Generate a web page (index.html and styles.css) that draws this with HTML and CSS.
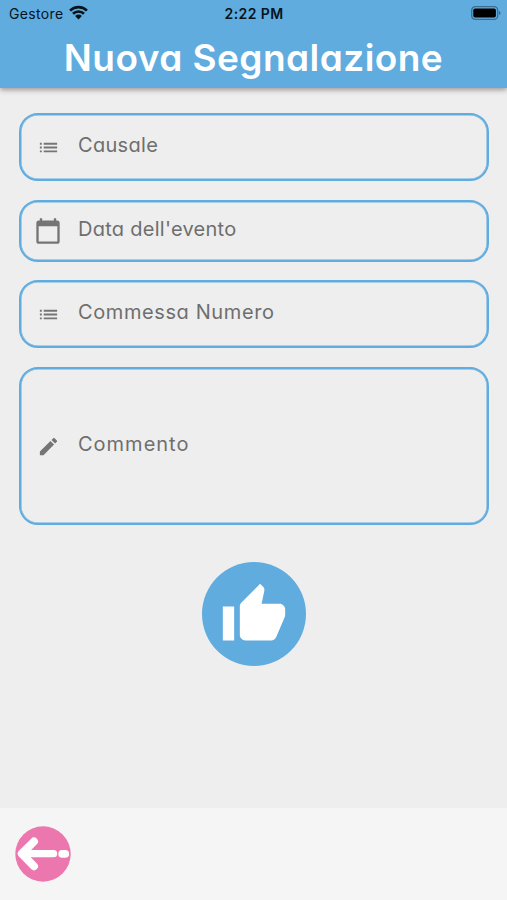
FILE: index.html
```html
<!DOCTYPE html>
<html lang="it">
<head>
<meta charset="utf-8">
<title>Nuova Segnalazione</title>
<link rel="stylesheet" href="styles.css">
</head>
<body>
<header class="header">
  <div class="status">
    <div class="carrier">
      <span>Gestore</span>
      <svg class="wifi" viewBox="0 0 18 14"><path d="M1 5.2a11.4 11.4 0 0 1 16 0M3.8 8.2a7.4 7.4 0 0 1 10.4 0" fill="none" stroke="#06131d" stroke-width="2.5"/><path d="M5.8 10.3a4.5 4.5 0 0 1 6.4 0L9 13.6z" fill="#06131d"/></svg>
    </div>
    <span class="clock">2:22 PM</span>
    <svg class="battery" viewBox="0 0 30 14"><rect x=".7" y=".7" width="26" height="12.6" rx="3.6" fill="none" stroke="#3c6c8e" stroke-width="1.3"/><rect x="2.3" y="2.4" width="22.6" height="9.2" rx="1.8" fill="#000"/><path d="M28 5v4q1.6-.7 1.6-2T28 5z" fill="#3c6c8e"/></svg>
  </div>
  <h1 class="title">Nuova Segnalazione</h1>
</header>
<main class="form">
  <div class="field field-select">
    <svg class="icon" viewBox="0 0 24 24"><path d="M3 13h2v-2H3zm0 4h2v-2H3zm0-8h2V7H3zm4 4h14v-2H7zm0 4h14v-2H7zM7 7v2h14V7z"/></svg>
    <span class="label causale">Causale</span>
  </div>
  <div class="field field-date">
    <svg class="icon icon-date" viewBox="0 0 24 24"><path d="M20 3h-1V1h-2v2H7V1H5v2H4c-1.1 0-2 .9-2 2v16c0 1.1.9 2 2 2h16c1.1 0 2-.9 2-2V5c0-1.1-.9-2-2-2zm0 18H4V8h16z"/></svg>
    <span class="label data">Data dell'evento</span>
  </div>
  <div class="field field-select">
    <svg class="icon" viewBox="0 0 24 24"><path d="M3 13h2v-2H3zm0 4h2v-2H3zm0-8h2V7H3zm4 4h14v-2H7zm0 4h14v-2H7zM7 7v2h14V7z"/></svg>
    <span class="label commessa">Commessa Numero</span>
  </div>
  <div class="field field-comment">
    <svg class="icon" viewBox="0 0 24 24"><path d="M3 17.25V21h3.75L17.81 9.94l-3.75-3.75zM20.71 7.04a1 1 0 0 0 0-1.41l-2.34-2.34a1 1 0 0 0-1.41 0l-1.83 1.83 3.75 3.75z"/></svg>
    <span class="label commento">Commento</span>
  </div>
  <button class="submit" type="button" aria-label="Invia">
    <svg viewBox="0 0 24 24"><path d="M1 21h4V9H1v12zm22-11c0-1.1-.9-2-2-2h-6.31l.95-4.57.03-.32c0-.41-.17-.79-.44-1.06L14.17 1 7.59 7.59C7.22 7.95 7 8.45 7 9v10c0 1.1.9 2 2 2h9c.83 0 1.54-.5 1.84-1.22l3.02-7.05c.09-.23.14-.47.14-.73z"/></svg>
  </button>
</main>
<footer class="footer">
  <button class="back" type="button" aria-label="Indietro">
    <svg viewBox="0 0 56 56"><circle cx="28" cy="28" r="27.7" fill="#eb77ae"/><path d="M19 15.5 6.8 27.7 19 40.2" fill="none" stroke="#fff" stroke-width="8" stroke-linecap="round" stroke-linejoin="round"/><path d="M7 27.7h31.6" stroke="#fff" stroke-width="7.2" stroke-linecap="round"/><rect x="43.3" y="24" width="10.8" height="7.8" rx="3.8" fill="#fff"/></svg>
  </button>
</footer>
</body>
</html>
```
FILE: styles.css
```css
* { box-sizing: border-box; }

body {
  margin: 0;
  height: 900px;
  display: flex;
  flex-direction: column;
  overflow: hidden;
  background: #eee;
  font-family: Inter, "Open Sans", sans-serif;
  font-feature-settings: "cv11";
}

button { border: 0; padding: 0; background: none; }
svg { display: block; }

.header {
  height: 88px;
  flex: none;
  background: #60acdf;
  box-shadow: 0 2px 5px rgba(70, 45, 45, .45);
}

.status {
  height: 27px;
  padding: 0 6px 0 9px;
  display: grid;
  grid-template-columns: 1fr auto 1fr;
  align-items: center;
  color: #06131d;
  font-feature-settings: normal;
}

.carrier {
  display: flex;
  align-items: center;
  gap: 5px;
  font-size: 14px;
  letter-spacing: .35px;
}

.wifi { width: 19px; height: 15px; margin-top: -2px; }
.clock { font-size: 14px; font-weight: 600; letter-spacing: .4px; margin-right: 2px; }
.battery { width: 30px; height: 14px; justify-self: end; margin-top: -1px; }

.title {
  margin: 0;
  height: 62px;
  line-height: 62px;
  text-align: center;
  color: #fff;
  font-size: 37px;
  font-weight: 600;
  letter-spacing: .45px;
  white-space: nowrap;
}

.form {
  flex: 1;
  padding: 25px 18px 0 19px;
  display: flex;
  flex-direction: column;
}

.field {
  border: 2px solid #60acdf;
  border-radius: 19px;
  box-shadow: inset 0 0 0 .5px #60acdf;
  display: flex;
  align-items: center;
  padding-left: 16px;
  margin-bottom: 19px;
}

.field-select { height: 68px; }
.field-date { height: 62px; margin-bottom: 18px; }
.field-comment { height: 158px; margin-bottom: 37px; }

.icon { width: 23px; height: 23px; margin: 0 18px 0 0; fill: #757575; }
.icon-date { width: 28px; height: 28px; margin: 0 16px 0 -3px; }

.label {
  color: #6e6e6e;
  font-size: 20px;
  line-height: 26px;
  margin-top: -4px;
  white-space: nowrap;
}

.causale { letter-spacing: .3px; }
.data { letter-spacing: .27px; }
.commessa { letter-spacing: .6px; }
.commento { letter-spacing: 1px; }

.submit {
  width: 104px;
  height: 104px;
  border-radius: 50%;
  background: #60acdf;
  align-self: center;
  display: flex;
  align-items: center;
  justify-content: center;
}

.submit svg { width: 68px; height: 68px; fill: #fff; margin-top: 2px; }

.footer {
  height: 92px;
  flex: none;
  background: #f5f5f5;
  padding: 18px 15px;
}

.back svg { width: 56px; height: 56px; }
```
